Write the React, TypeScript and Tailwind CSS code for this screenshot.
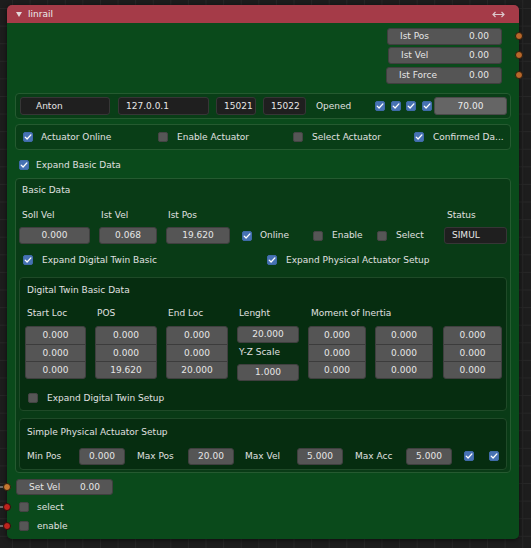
import React from "react";

const Check = ({ on }: { on?: boolean }) =>
  on ? (
    <span className="flex h-[10px] w-[10px] shrink-0 items-center justify-center rounded-[2px] border border-[#3f6aa8] bg-[#4772b3]">
      <svg width="8" height="8" viewBox="0 0 8 8">
        <path d="M1.2 4.1 L3.1 6 L6.9 1.9" stroke="#ffffff" strokeWidth="1.3" fill="none" strokeLinecap="round" strokeLinejoin="round" />
      </svg>
    </span>
  ) : (
    <span className="block h-[10px] w-[10px] shrink-0 rounded-[2px] border border-[#444444] bg-[#565656]" />
  );

const Num = ({ v, cls }: { v: string; cls: string }) => (
  <div className={"flex h-[17px] shrink-0 items-center justify-center rounded-[3px] border border-[#3f3f3f] bg-[#555555] text-[#e6e6e6] " + cls}>{v}</div>
);

const Txt = ({ v, cls }: { v: string; cls: string }) => (
  <div className={"flex h-[18px] shrink-0 items-center rounded-[3px] border border-[#363636] bg-[#1f1f1f] text-[#e6e6e6] " + cls}>{v}</div>
);

const Stack = ({ vals, cls }: { vals: string[]; cls: string }) => (
  <div className={"flex shrink-0 flex-col overflow-hidden rounded-[3px] border border-[#3f3f3f] bg-[#555555] " + cls}>
    {vals.map((v, i) => (
      <div key={i} className={"flex h-[17px] items-center justify-center text-[#e6e6e6] " + (i > 0 ? "border-t border-[#3c3c3c]" : "")}>{v}</div>
    ))}
  </div>
);

const OutRow = ({ label, cls, top }: { label: string; cls: string; top: string }) => (
  <div className={"relative flex h-[17px] justify-end pr-[17px] " + top}>
    <div className={"flex h-[17px] items-center justify-between rounded-[3px] border border-[#3f3f3f] bg-[#555555] px-[12px] text-[#e6e6e6] " + cls}>
      <span>{label}</span>
      <span>0.00</span>
    </div>
    <span className="absolute right-[-4px] top-[4px] h-[8px] w-[8px] rounded-full border border-[#2e1c0c] bg-[#b9682a]" />
  </div>
);

export default function App() {
  return (
    <div className="relative h-[548px] w-[531px] overflow-hidden bg-[#1d1d1d] bg-[linear-gradient(to_right,#272727_1px,transparent_1px),linear-gradient(to_bottom,#272727_1px,transparent_1px)] [background-position:12px_8px] [background-size:17.6px_17.6px] font-['DejaVu_Sans',sans-serif] text-[9px] leading-none text-[#e0e0e0]">
      <div className="absolute left-[7px] top-[5px] w-[512px] rounded-[5px] shadow-[0_1px_5px_rgba(0,0,0,0.6)]">
        {/* header */}
        <div className="flex h-[18px] items-center rounded-t-[5px] bg-[#a53b48] pl-[9px] pr-[14px] text-[#ececec]">
          <svg width="6" height="5" viewBox="0 0 6 5">
            <polygon points="0,0 6,0 3,5" fill="#e4d8da" />
          </svg>
          <span className="ml-[6px]">linrail</span>
          <svg className="ml-auto" width="13" height="7" viewBox="0 0 13 7">
            <path d="M1 3.5 H12 M3.5 1 L1 3.5 L3.5 6 M9.5 1 L12 3.5 L9.5 6" stroke="#dcc8cb" strokeWidth="1.2" fill="none" />
          </svg>
        </div>
        {/* body */}
        <div className="flex flex-col rounded-b-[5px] bg-[#0a4a1b] pb-[6px]">
          <div className="flex flex-col pt-[5px]">
            <OutRow label="Ist Pos" cls="w-[115px]" top="" />
            <OutRow label="Ist Vel" cls="w-[114px]" top="mt-[2px]" />
            <OutRow label="Ist Force" cls="w-[116px]" top="mt-[3px]" />
          </div>

          {/* connection panel */}
          <div className="mx-[8px] mt-[9px] flex h-[26px] items-center rounded-[4px] border border-[#255a30] bg-[#093e17] pl-[4px]">
            <Txt v="Anton" cls="w-[90px] pl-[15px]" />
            <Txt v="127.0.0.1" cls="ml-[8px] w-[91px] pl-[7px]" />
            <Txt v="15021" cls="ml-[7px] w-[40px] pl-[7px]" />
            <Txt v="15022" cls="ml-[7px] w-[43px] pl-[7px]" />
            <span className="ml-[10px] w-[59px]">Opened</span>
            <Check on />
            <span className="ml-[6px]"><Check on /></span>
            <span className="ml-[5px]"><Check on /></span>
            <span className="ml-[6px]"><Check on /></span>
            <div className="ml-[2px] flex h-[18px] w-[73px] items-center justify-center rounded-[3px] border border-[#4a4a4a] bg-[#656565] text-[#ececec]">70.00</div>
          </div>

          {/* actuator panel */}
          <div className="mx-[8px] mt-[5px] flex h-[26px] items-center rounded-[4px] border border-[#255a30] bg-[#093e17] pl-[7px]">
            <div className="flex w-[135px] items-center gap-[8px]"><Check on /><span>Actuator Online</span></div>
            <div className="flex w-[135px] items-center gap-[9px]"><Check /><span>Enable Actuator</span></div>
            <div className="flex w-[121px] items-center gap-[9px]"><Check /><span>Select Actuator</span></div>
            <div className="flex items-center gap-[9px]"><Check on /><span>Confirmed Da...</span></div>
          </div>

          <div className="mt-[8px] flex h-[14px] items-center gap-[7px] pl-[12px]">
            <Check on />
            <span>Expand Basic Data</span>
          </div>

          {/* Basic Data panel */}
          <div className="mx-[8px] mt-[6px] flex flex-col rounded-[4px] border border-[#255a30] bg-[#093b16] pb-[2px] pt-[4px]">
            <div className="flex h-[14px] items-center pl-[6px]">Basic Data</div>
            <div className="mt-[12px] flex h-[12px] items-center pl-[6px]">
              <span className="w-[79px]">Soll Vel</span>
              <span className="w-[67px]">Ist Vel</span>
              <span className="w-[279px]">Ist Pos</span>
              <span>Status</span>
            </div>
            <div className="mt-[6px] flex h-[17px] items-center pl-[3px]">
              <Num v="0.000" cls="w-[71px]" />
              <Num v="0.068" cls="ml-[9px] w-[58px]" />
              <Num v="19.620" cls="ml-[9px] w-[64px]" />
              <span className="ml-[12px]"><Check on /></span>
              <span className="ml-[8px] w-[53px]">Online</span>
              <Check />
              <span className="ml-[9px] w-[45px]">Enable</span>
              <Check />
              <span className="ml-[9px] w-[48px]">Select</span>
              <div className="flex h-[17px] w-[63px] items-center rounded-[3px] border border-[#363636] bg-[#1f1f1f] pl-[7px] text-[#e6e6e6]">SIMUL</div>
            </div>
            <div className="mt-[9px] flex h-[14px] items-center pl-[7px]">
              <div className="flex w-[244px] items-center gap-[9px]"><Check on /><span>Expand Digital Twin Basic</span></div>
              <div className="flex items-center gap-[9px]"><Check on /><span>Expand Physical Actuator Setup</span></div>
            </div>

            {/* Digital Twin Basic Data */}
            <div className="mx-[3px] mt-[10px] flex flex-col rounded-[4px] border border-[#1f4a28] bg-[#062d10] pb-[5px] pt-[5px]">
              <div className="flex h-[14px] items-center pl-[7px]">Digital Twin Basic Data</div>
              <div className="mt-[10px] flex h-[12px] items-center pl-[7px]">
                <span className="w-[70px]">Start Loc</span>
                <span className="w-[71px]">POS</span>
                <span className="w-[71px]">End Loc</span>
                <span className="w-[72px]">Lenght</span>
                <span>Moment of Inertia</span>
              </div>
              <div className="mt-[7px] flex items-start pl-[5px]">
                <Stack vals={["0.000", "0.000", "0.000"]} cls="w-[61px]" />
                <Stack vals={["0.000", "0.000", "19.620"]} cls="ml-[9px] w-[62px]" />
                <Stack vals={["0.000", "0.000", "20.000"]} cls="ml-[9px] w-[62px]" />
                <div className="ml-[9px] flex w-[62px] flex-col">
                  <Num v="20.000" cls="w-[62px]" />
                  <div className="flex h-[18px] items-center pl-[2px]">Y-Z Scale</div>
                  <Num v="1.000" cls="mt-[3px] w-[62px]" />
                </div>
                <Stack vals={["0.000", "0.000", "0.000"]} cls="ml-[9px] w-[58px]" />
                <Stack vals={["0.000", "0.000", "0.000"]} cls="ml-[9px] w-[58px]" />
                <Stack vals={["0.000", "0.000", "0.000"]} cls="ml-[10px] w-[59px]" />
              </div>
              <div className="mt-[10px] flex h-[14px] items-center gap-[9px] pl-[8px]">
                <Check />
                <span>Expand Digital Twin Setup</span>
              </div>
            </div>

            {/* Simple Physical Actuator Setup */}
            <div className="mx-[3px] mt-[7px] flex flex-col rounded-[4px] border border-[#1f4a28] bg-[#062d10] pb-[5px] pt-[7px]">
              <div className="flex h-[12px] items-center pl-[7px]">Simple Physical Actuator Setup</div>
              <div className="mt-[10px] flex h-[16px] items-center pl-[7px]">
                <span className="w-[52px]">Min Pos</span>
                <Num v="0.000" cls="w-[46px]" />
                <span className="ml-[12px] w-[51px]">Max Pos</span>
                <Num v="20.00" cls="w-[46px]" />
                <span className="ml-[11px] w-[52px]">Max Vel</span>
                <Num v="5.000" cls="w-[46px]" />
                <span className="ml-[12px] w-[51px]">Max Acc</span>
                <Num v="5.000" cls="w-[46px]" />
                <span className="ml-[12px]"><Check on /></span>
                <span className="ml-[15px]"><Check on /></span>
              </div>
            </div>
          </div>

          {/* inputs */}
          <div className="relative mt-[6px] flex h-[16px] pl-[9px]">
            <div className="flex h-[16px] w-[97px] items-center justify-between rounded-[3px] border border-[#3f3f3f] bg-[#555555] px-[12px] text-[#e6e6e6]">
              <span>Set Vel</span>
              <span>0.00</span>
            </div>
            <span className="absolute left-[-7px] top-[7px] h-[2px] w-[5px] bg-[#6a6a6a]" />
            <span className="absolute left-[-4px] top-[4px] h-[8px] w-[8px] rounded-full border border-[#2e1c0c] bg-[#c47832]" />
          </div>
          <div className="relative mt-[5px] flex h-[14px] items-center gap-[8px] pl-[12px]">
            <Check />
            <span>select</span>
            <span className="absolute left-[-7px] top-[6px] h-[2px] w-[5px] bg-[#6a6a6a]" />
            <span className="absolute left-[-4px] top-[3px] h-[8px] w-[8px] rounded-full border border-[#2e0c0c] bg-[#bd241d]" />
          </div>
          <div className="relative mt-[5px] flex h-[14px] items-center gap-[8px] pl-[12px]">
            <Check />
            <span>enable</span>
            <span className="absolute left-[-7px] top-[6px] h-[2px] w-[5px] bg-[#6a6a6a]" />
            <span className="absolute left-[-4px] top-[3px] h-[8px] w-[8px] rounded-full border border-[#2e0c0c] bg-[#bd241d]" />
          </div>
        </div>
      </div>
    </div>
  );
}
